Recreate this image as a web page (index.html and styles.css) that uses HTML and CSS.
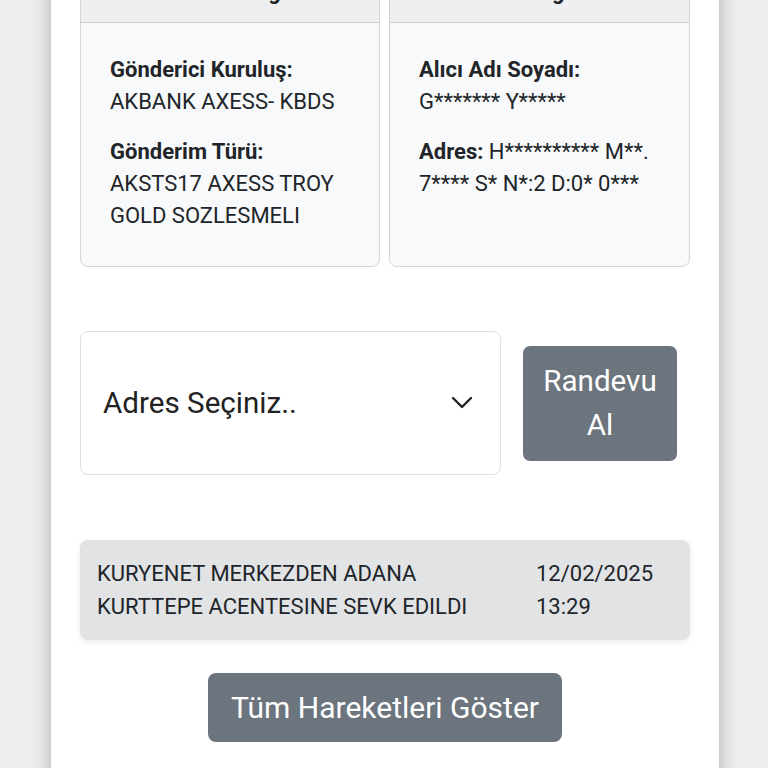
FILE: index.html
```html
<!DOCTYPE html>
<html lang="tr">
<head>
<meta charset="utf-8">
<title>Kargo Takip</title>
<link rel="stylesheet" href="styles.css">
</head>
<body>
<div class="panel">
  <div class="content">
    <div class="cards">
      <div class="card">
        <div class="card-head">Gönderici Bilgileri</div>
        <div class="card-body">
          <p><b>Gönderici Kuruluş:</b><br>AKBANK AXESS- KBDS</p>
          <p><b>Gönderim Türü:</b><br>AKSTS17 AXESS TROY GOLD SOZLESMELI</p>
        </div>
      </div>
      <div class="card">
        <div class="card-head">Alıcı Bilgileri</div>
        <div class="card-body">
          <p><b>Alıcı Adı Soyadı:</b><br>G******* Y*****</p>
          <p><b>Adres:</b> H********** M**. 7**** S* N*:2 D:0* 0***</p>
        </div>
      </div>
    </div>

    <div class="appt-row">
      <div class="select">
        <span>Adres Seçiniz..</span>
        <svg class="chev" width="22" height="14" viewBox="0 0 22 14"><polyline points="2,2 11,11 20,2" fill="none" stroke="#222" stroke-width="2.4" stroke-linecap="round" stroke-linejoin="round"/></svg>
      </div>
      <button class="btn btn-appt">Randevu<br>Al</button>
    </div>

    <div class="move">
      <div class="move-text">KURYENET MERKEZDEN ADANA KURTTEPE ACENTESINE SEVK EDILDI</div>
      <div class="move-date">12/02/2025<br>13:29</div>
    </div>

    <div class="all-row">
      <button class="btn btn-all">Tüm Hareketleri Göster</button>
    </div>
  </div>
</div>
</body>
</html>
```

FILE: styles.css
```css
html, body {
  margin: 0;
  padding: 0;
  background: #eeeeee;
  font-family: Roboto, "Noto Sans", Arial, sans-serif;
  color: #212529;
  overflow: hidden;
}

.panel {
  width: 668px;
  margin-left: 51px;
  min-height: 820px;
  background: #ffffff;
  box-shadow: 0 0 18px rgba(0, 0, 0, 0.28);
}

.content {
  margin-top: -38px;
  padding: 0 29px 0 29px;
}

.cards {
  display: grid;
  grid-template-columns: 300px 301px;
  column-gap: 9px;
}

.card {
  border: 1px solid #d3d4d6;
  border-radius: 8px;
  background: #f8f9fa;
  overflow: hidden;
}

.card-head {
  padding: 13px 10px 14px;
  line-height: 32px;
  font-size: 22px;
  font-weight: 700;
  text-align: center;
  background: #eeeff1;
  border-bottom: 1px solid #cfd0d2;
}

.card-body {
  padding: 31px 8px 34px 29px;
  font-size: 22px;
  line-height: 32px;
}

.card-body p {
  margin: 0 0 18px 0;
}
.card-body p:last-child {
  margin-bottom: 0;
}
.card-body b {
  font-weight: 700;
}

.appt-row {
  display: flex;
  align-items: center;
  gap: 22px;
  margin-top: 64px;
}

.select {
  box-sizing: border-box;
  width: 421px;
  height: 144px;
  border: 1px solid #dee0e2;
  border-radius: 8px;
  display: flex;
  align-items: center;
  justify-content: space-between;
  padding: 0 27px 0 22px;
  font-size: 29.6px;
  color: #222;
}

.chev {
  display: block;
}

.btn {
  border: none;
  background: #6c757d;
  color: #ffffff;
  font-family: Roboto, "Noto Sans", Arial, sans-serif;
  cursor: pointer;
}

.btn-appt {
  width: 154px;
  height: 115px;
  border-radius: 7px;
  font-size: 29.6px;
  line-height: 44px;
  padding: 0 8px;
}

.move {
  margin-top: 65px;
  display: flex;
  justify-content: space-between;
  background: #e2e3e5;
  border-radius: 8px;
  padding: 17px 36px 17px 17px;
  font-size: 22px;
  line-height: 33px;
  box-shadow: 0 2px 6px rgba(0, 0, 0, 0.08);
}

.move-text {
  width: 410px;
}

.move-date {
  width: 118px;
  white-space: nowrap;
}

.all-row {
  display: flex;
  justify-content: center;
  margin-top: 33px;
}

.btn-all {
  height: 69px;
  padding: 0 23px;
  border-radius: 8px;
  font-size: 30px;
}
```
